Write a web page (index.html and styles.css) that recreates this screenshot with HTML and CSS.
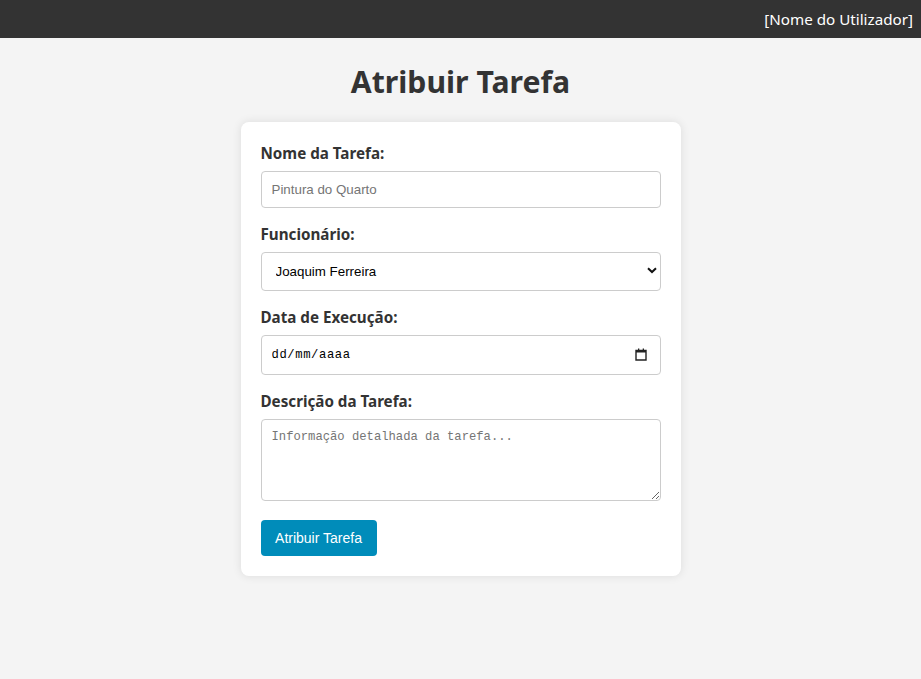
FILE: index.html
```html
<!DOCTYPE html>
<html lang="pt">
<head>
<meta charset="utf-8">
<title>Atribuir Tarefa</title>
<link rel="stylesheet" href="styles.css">
</head>
<body>
<header class="topbar">
  <span class="user">[Nome do Utilizador]</span>
</header>
<main class="page">
  <h1 class="title">Atribuir Tarefa</h1>
  <form class="card">
    <label class="label" for="nome">Nome da Tarefa:</label>
    <input class="field" id="nome" type="text" placeholder="Pintura do Quarto">

    <label class="label" for="func">Funcionário:</label>
    <div class="select-wrap">
      <select class="field select" id="func">
        <option>Joaquim Ferreira</option>
      </select>
      <svg class="chev" width="10" height="7" viewBox="0 0 10 7"><path d="M1 1.2 L5 5 L9 1.2" fill="none" stroke="#111" stroke-width="2"/></svg>
    </div>

    <label class="label" for="data">Data de Execução:</label>
    <div class="select-wrap">
      <input class="field date" id="data" type="text" placeholder="dd/mm/aaaa">
      <svg class="cal" width="12" height="13" viewBox="0 0 12 13"><path d="M1 2.5 H11 V12 H1 Z" fill="none" stroke="#222" stroke-width="1.4"/><rect x="1" y="2" width="10" height="2.5" fill="#222"/><rect x="3" y="0.5" width="1.3" height="2" fill="#222"/><rect x="7.7" y="0.5" width="1.3" height="2" fill="#222"/></svg>
    </div>

    <label class="label" for="desc">Descrição da Tarefa:</label>
    <textarea class="field area" id="desc" placeholder="Informação detalhada da tarefa..."></textarea>

    <button class="btn" type="button">Atribuir Tarefa</button>
  </form>
</main>
</body>
</html>
```
FILE: styles.css
```css
* { box-sizing: border-box; }
html, body { margin: 0; padding: 0; }
body {
  background: #f4f4f4;
  font-family: "Noto Sans", "Open Sans", sans-serif;
  color: #333;
  height: 679px;
}
.topbar {
  background: #333;
  height: 38px;
  display: flex;
  align-items: center;
  justify-content: flex-end;
  padding: 0 8px;
}
.user {
  color: #fff;
  font-size: 15.2px;
}
.page {
  display: flex;
  flex-direction: column;
  align-items: center;
}
.title {
  font-size: 30.2px;
  font-weight: 700;
  margin: 22px 0 18px;
  line-height: 44px;
  color: #333;
}
.card {
  width: 440px;
  background: #fff;
  border-radius: 8px;
  box-shadow: 0 0 10px rgba(0,0,0,0.1);
  padding: 20px;
  display: flex;
  flex-direction: column;
}
.label {
  font-weight: 700;
  font-size: 15.2px;
  line-height: 22px;
  margin-bottom: 7px;
}
.field {
  width: 100%;
  border: 1px solid #ccc;
  border-radius: 4px;
  background: #fff;
  font-family: "Liberation Sans", Arial, sans-serif;
  font-size: 13.33px;
  color: #000;
  margin: 0 0 15px;
}
.field::placeholder { color: #757575; }
input.field {
  height: 37px;
  padding: 0 10px;
}
.select-wrap { position: relative; }
.select {
  appearance: none;
  -webkit-appearance: none;
  height: 39px;
  padding: 0 14px;
  color: #000;
}
.chev {
  position: absolute;
  right: 4px;
  top: 15px;
  pointer-events: none;
}
input.date {
  height: 40px;
  font-family: "Liberation Mono", monospace;
  font-size: 12.2px;
  letter-spacing: 0.6px;
  padding: 0 10px;
}
input.date::placeholder { color: #000; }
.cal {
  position: absolute;
  right: 14px;
  top: 13px;
  pointer-events: none;
}
.area {
  height: 82px;
  padding: 10px;
  font-family: "Liberation Mono", monospace;
  font-size: 12.2px;
  resize: vertical;
  margin-bottom: 19px;
}
.btn {
  align-self: flex-start;
  width: 116px;
  height: 36px;
  background: #008cba;
  color: #fff;
  border: none;
  border-radius: 4px;
  font-family: "Liberation Sans", Arial, sans-serif;
  font-size: 14px;
  padding: 0;
}
```
